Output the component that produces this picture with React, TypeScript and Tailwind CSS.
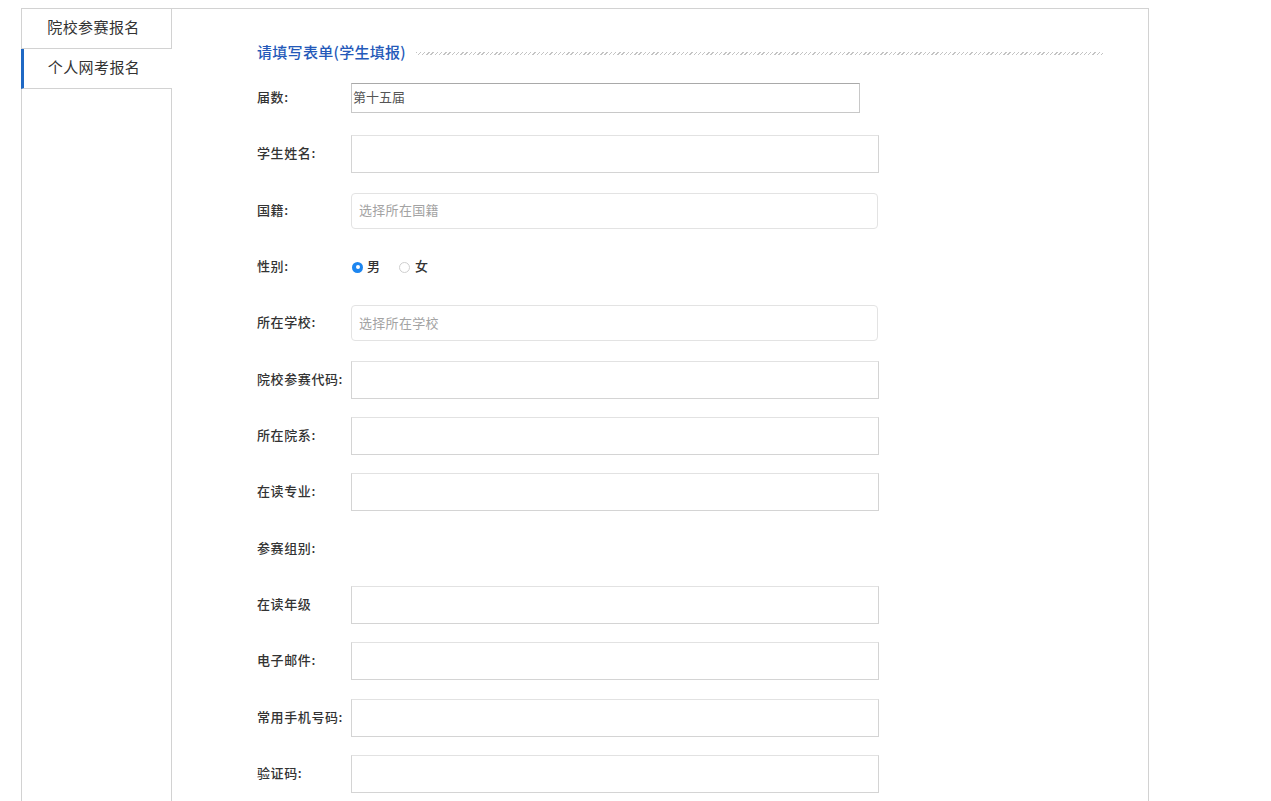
import React from "react";

const FONT = { fontFamily: '"Noto Sans CJK SC", "Noto Sans", sans-serif' };

type Row =
  | { label: string; kind: "text" }
  | { label: string; kind: "select"; placeholder: string }
  | { label: string; kind: "radio" }
  | { label: string; kind: "none" }
  | { label: string; kind: "fixed"; value: string };

const ROWS: Row[] = [
  { label: "届数:", kind: "fixed", value: "第十五届" },
  { label: "学生姓名:", kind: "text" },
  { label: "国籍:", kind: "select", placeholder: "选择所在国籍" },
  { label: "性别:", kind: "radio" },
  { label: "所在学校:", kind: "select", placeholder: "选择所在学校" },
  { label: "院校参赛代码:", kind: "text" },
  { label: "所在院系:", kind: "text" },
  { label: "在读专业:", kind: "text" },
  { label: "参赛组别:", kind: "none" },
  { label: "在读年级", kind: "text" },
  { label: "电子邮件:", kind: "text" },
  { label: "常用手机号码:", kind: "text" },
  { label: "验证码:", kind: "text" },
];

function Field({ row }: { row: Row }) {
  if (row.kind === "fixed") {
    return (
      <input
        readOnly
        value={row.value}
        className="h-[30px] w-[509px] border border-[#c8c8c8] border-t-[#a9a9a9] px-px pb-[3px] text-[13px] text-[#555] outline-none"
        style={FONT}
      />
    );
  }
  if (row.kind === "text") {
    return (
      <input
        readOnly
        className="h-[38px] w-[528px] border border-[#d4d4d4] border-t-[#e2e2e2] px-2 text-[13px] text-[#333] outline-none"
        style={FONT}
      />
    );
  }
  if (row.kind === "select") {
    return (
      <div className="flex h-[36px] w-[527px] items-center rounded-[4px] border border-[#e3e3e3] pb-[2px] pl-[7px] text-[13px] tracking-[0.3px] text-[#a3a3a3]">
        {row.placeholder}
      </div>
    );
  }
  if (row.kind === "radio") {
    return (
      <div className="flex items-center text-[13px] text-[#333]">
        <span className="ml-px flex h-[11px] w-[11px] items-center justify-center rounded-full bg-[#1d86f0]">
          <span className="h-[4px] w-[4px] rounded-full bg-white" />
        </span>
        <span className="ml-[4px] pb-[2px] font-medium">男</span>
        <span className="ml-[19px] h-[11px] w-[11px] rounded-full border border-[#cfcfcf]" />
        <span className="ml-[5px] pb-[2px] font-medium">女</span>
      </div>
    );
  }
  return null;
}

export default function App() {
  return (
    <div className="min-h-screen bg-white pl-[21px] pt-2" style={FONT}>
      <div className="flex w-[1128px] border-r border-t border-[#d2d2d2]">
        <div className="flex w-[151px] shrink-0 flex-col">
          <div className="flex h-[40px] items-center justify-center border-b border-l border-r border-[#d2d2d2] pb-[2px] pr-[6px] text-[15px] tracking-[0.4px] text-[#333]">
            院校参赛报名
          </div>
          <div className="flex h-[40px] items-center justify-center border-b border-l-[3px] border-[#d2d2d2] border-l-[#1f68c4] pb-[2px] pr-[8px] text-[15px] tracking-[0.4px] text-[#333]">
            个人网考报名
          </div>
          <div className="flex-1 border-l border-r border-[#d2d2d2]" />
        </div>

        <div className="flex-1 pb-12 pl-[85px] pr-[45px] pt-[34px]">
          <div className="flex h-[20px] items-center">
            <span className="pb-[2px] text-[15px] font-medium leading-[20px] tracking-[0.3px] text-[#2459b9]">请填写表单(学生填报)</span>
            <div className="ml-[10px] h-[3px] flex-1 bg-[repeating-linear-gradient(135deg,#c4c4c4_0,#c4c4c4_1px,transparent_1px,transparent_3px)]" />
          </div>

          <div className="mt-[7px] flex flex-col">
            {ROWS.map((r) => (
              <div key={r.label} className="flex h-[56.33px] items-center">
                <div className="w-[94px] shrink-0 pb-[3px] text-[13px] font-medium tracking-[0.6px] text-[#333]">{r.label}</div>
                <Field row={r} />
              </div>
            ))}
          </div>
        </div>
      </div>
    </div>
  );
}
